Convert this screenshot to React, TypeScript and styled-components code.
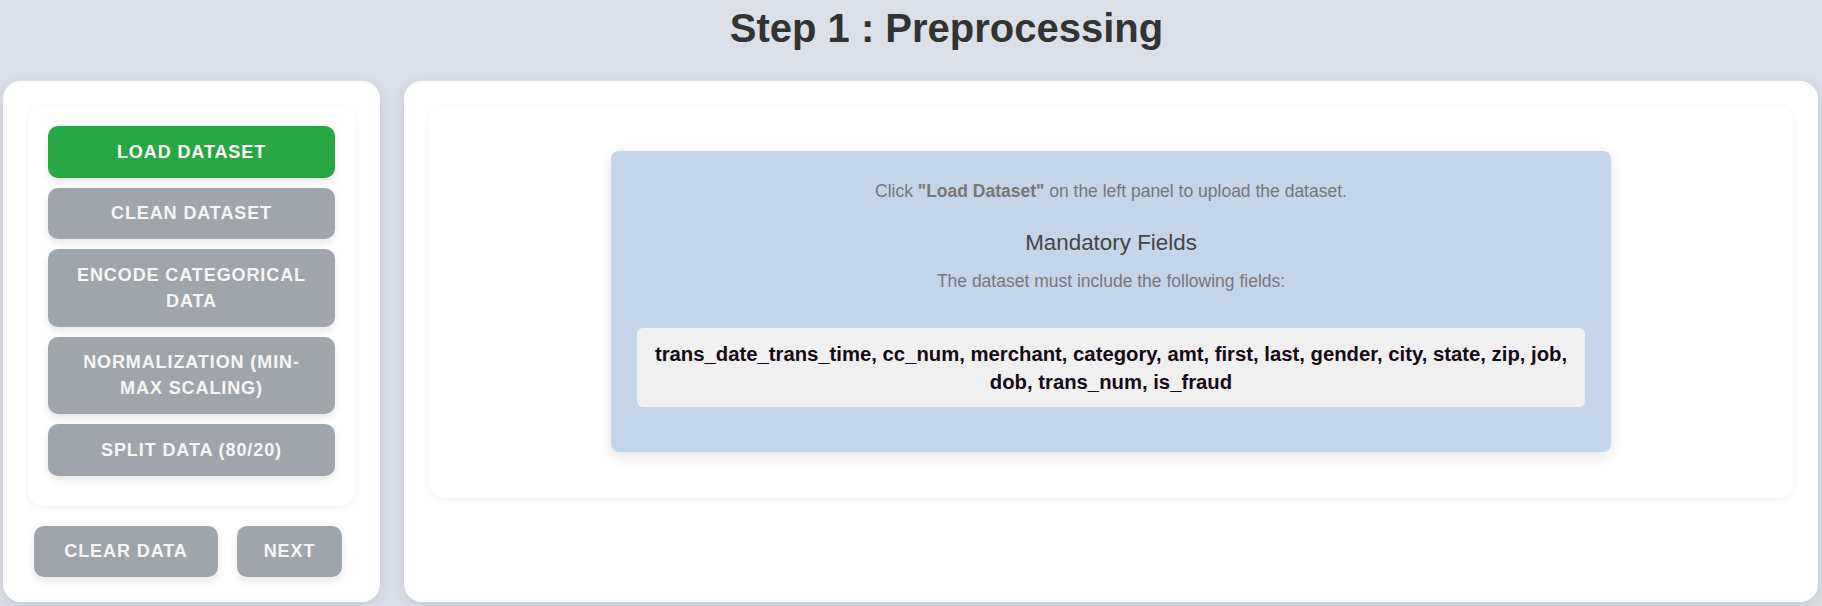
import React from "react";
import styled, { createGlobalStyle } from "styled-components";

const GlobalStyle = createGlobalStyle`
  html, body {
    margin: 0;
    padding: 0;
    background: #dbe0e8;
    font-family: "Liberation Sans", Arial, sans-serif;
  }
  * { box-sizing: border-box; }
`;

const Page = styled.div`
  width: 1822px;
  height: 606px;
  display: flex;
  flex-direction: column;
  padding: 0 4px 0 3px;
`;

const Title = styled.h1`
  margin: 5px 0 30px;
  padding-left: 72px;
  font-size: 40px;
  line-height: 46px;
  font-weight: 700;
  color: #333;
  text-align: center;
`;

const Columns = styled.div`
  display: flex;
  gap: 24px;
  align-items: stretch;
`;

const Panel = styled.section<{ $width?: number }>`
  background: #fff;
  border-radius: 18px;
  box-shadow: 0 4px 15px rgba(0, 0, 0, 0.1);
  padding: 25px 25px 25px;
  display: flex;
  flex-direction: column;
  ${(p) => (p.$width ? `width: ${p.$width}px; flex: none;` : "flex: 1;")}
`;

const Card = styled.div<{ $pad: string }>`
  background: #fff;
  border-radius: 15px;
  box-shadow: 0 2px 8px rgba(0, 0, 0, 0.06);
  padding: ${(p) => p.$pad};
  display: flex;
  flex-direction: column;
  gap: 10px;
`;

const ActionButton = styled.button<{ $active?: boolean; $width?: number }>`
  border: none;
  border-radius: 10px;
  background: ${(p) => (p.$active ? "#28a745" : "#a0a5ab")};
  color: ${(p) => (p.$active ? "#ffffff" : "#f6f6f6")};
  font-family: "Liberation Sans", Arial, sans-serif;
  font-weight: 700;
  font-size: 18px;
  letter-spacing: 0.9px;
  line-height: 26px;
  text-transform: uppercase;
  text-align: center;
  padding: 12.75px 20px;
  box-shadow: 0 4px 8px rgba(0, 0, 0, 0.1);
  cursor: pointer;
  ${(p) => (p.$width ? `width: ${p.$width}px; padding-left: 0; padding-right: 0;` : "width: 100%;")}
`;

const FooterRow = styled.div`
  display: flex;
  gap: 19px;
  margin-top: 20px;
  padding-left: 6px;
`;

const InfoBox = styled.div`
  width: 1000px;
  margin: 0 auto;
  background: #c3d5e9;
  border-radius: 8px;
  box-shadow: 0 4px 14px rgba(0, 0, 0, 0.12);
  padding: 30px 26px 45px;
  text-align: center;
`;

const Note = styled.p<{ $gap?: number }>`
  margin: ${(p) => p.$gap ?? 0}px 0 0;
  font-size: 17.5px;
  line-height: 20px;
  color: #777;
  b { font-weight: 700; }
`;

const SubTitle = styled.h3`
  margin: 28px 0 0;
  font-size: 22.4px;
  line-height: 28px;
  font-weight: 400;
  color: #454545;
`;

const FieldList = styled.div`
  margin-top: 37px;
  background: #f0f0f0;
  border-radius: 6px;
  padding: 11.5px 15px;
  font-size: 20.3px;
  line-height: 28px;
  font-weight: 700;
  color: #160a16;
`;

const steps = [
  { label: "Load Dataset", active: true },
  { label: "Clean Dataset" },
  { label: "Encode Categorical Data" },
  { label: "Normalization (Min-Max Scaling)" },
  { label: "Split Data (80/20)" },
];

export default function App() {
  return (
    <>
      <GlobalStyle />
      <Page>
        <Title>Step 1 : Preprocessing</Title>
        <Columns>
          <Panel $width={377}>
            <Card $pad="20px 20px 30px">
              {steps.map((s) => (
                <ActionButton key={s.label} $active={s.active}>
                  {s.label}
                </ActionButton>
              ))}
            </Card>
            <FooterRow>
              <ActionButton $width={184}>Clear Data</ActionButton>
              <ActionButton $width={105}>Next</ActionButton>
            </FooterRow>
          </Panel>
          <Panel>
            <Card $pad="45px 0 46px">
              <InfoBox>
                <Note>
                  Click <b>"Load Dataset"</b> on the left panel to upload the dataset.
                </Note>
                <SubTitle>Mandatory Fields</SubTitle>
                <Note $gap={14}>The dataset must include the following fields:</Note>
                <FieldList>
                  trans_date_trans_time, cc_num, merchant, category, amt, first, last, gender, city,
                  state, zip, job, dob, trans_num, is_fraud
                </FieldList>
              </InfoBox>
            </Card>
          </Panel>
        </Columns>
      </Page>
    </>
  );
}
